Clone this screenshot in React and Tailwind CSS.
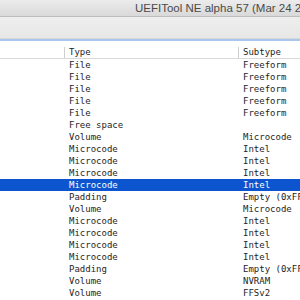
const rows = [
  ["File", "Freeform"],
  ["File", "Freeform"],
  ["File", "Freeform"],
  ["File", "Freeform"],
  ["File", "Freeform"],
  ["Free space", ""],
  ["Volume", "Microcode"],
  ["Microcode", "Intel"],
  ["Microcode", "Intel"],
  ["Microcode", "Intel"],
  ["Microcode", "Intel"],
  ["Padding", "Empty (0xFF)"],
  ["Volume", "Microcode"],
  ["Microcode", "Intel"],
  ["Microcode", "Intel"],
  ["Microcode", "Intel"],
  ["Microcode", "Intel"],
  ["Padding", "Empty (0xFF)"],
  ["Volume", "NVRAM"],
  ["Volume", "FFSv2"],
];

const mono = { fontFamily: '"DejaVu Sans Mono", "Liberation Mono", monospace' };

const App = () => {
  return (
    <div className="w-[300px] h-[300px] overflow-hidden bg-white flex flex-col">
      {/* title bar */}
      <div className="h-[17px] shrink-0 bg-gradient-to-b from-[#ececec] to-[#d9d9d9] border-b border-[#bdbdbd] overflow-hidden">
        <div
          className="pl-[135px] whitespace-nowrap text-[11.5px] leading-[16px] text-[#4a4a4a]"
          style={{ fontFamily: '"Liberation Sans", Arial, sans-serif' }}
        >
          UEFITool NE alpha 57 (Mar 24 2019)
        </div>
      </div>

      {/* toolbar */}
      <div className="h-[22px] shrink-0 bg-gradient-to-b from-[#eeeeee] to-[#e7e7e7] border-b border-[#d8d8d8]" />
      <div className="h-[2px] shrink-0 bg-[#a9c6ee]" />

      {/* header */}
      <div
        className="h-[18px] shrink-0 grid grid-cols-[64px_174px_1fr] items-center border-b border-[#d9d9d9] text-[9px] text-[#1e1e1e] pt-[5px]"
        style={mono}
      >
        <div />
        <div className="flex items-center">
          <span className="h-[11px] border-l border-[#cfcfcf]" />
          <span className="pl-[4px]">Type</span>
        </div>
        <div className="flex items-center whitespace-nowrap">
          <span className="h-[11px] border-l border-[#cfcfcf]" />
          <span className="pl-[4px]">Subtype</span>
        </div>
      </div>

      {/* rows */}
      <div className="flex flex-col text-[9px] text-[#1e1e1e]" style={mono}>
        {rows.map(([type, sub], i) => (
          <div
            key={i}
            className={
              i === 10
                ? "h-[12px] grid grid-cols-[64px_174px_1fr] items-center bg-[#0d55cf] text-white"
                : "h-[12px] grid grid-cols-[64px_174px_1fr] items-center"
            }
          >
            <div />
            <div className="pl-[5px] whitespace-nowrap leading-[12px]">{type}</div>
            <div className="pl-[5px] whitespace-nowrap leading-[12px] overflow-hidden">{sub}</div>
          </div>
        ))}
      </div>
    </div>
  );
};

export default App;
